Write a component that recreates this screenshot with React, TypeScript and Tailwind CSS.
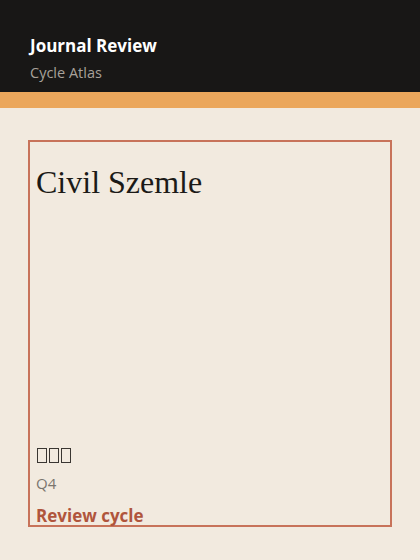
export default function App() {
  return (
    <div className="min-h-[560px] w-[420px] bg-[#f2eadf] font-['Open_Sans',sans-serif]">
      <header className="bg-[#181716] px-[30px] pb-[9px] pt-[34px]">
        <h1 className="text-[17px] font-bold leading-[23px] text-white">Journal Review</h1>
        <p className="mt-[5px] text-[14.5px] leading-[21px] text-[#a8a29a]">Cycle Atlas</p>
      </header>
      <div className="h-[16px] bg-[#eba75c]" />
      <main className="px-[28px] pt-[32px]">
        <article className="flex h-[387px] flex-col border-2 border-[#c8735a] px-[6px]">
          <h2 className="mt-[22px] font-['Liberation_Serif',serif] text-[32px] leading-[36px] text-[#1c1a17]">
            Civil Szemle
          </h2>
          <div className="mt-auto">
            {/* glyphs with no font: tofu boxes */}
            <div className="flex h-[22px] items-center gap-[2px] pl-[1px]">
              <span className="h-[15px] w-[10px] border-[1.5px] border-[#3a3632]" />
              <span className="h-[15px] w-[10px] border-[1.5px] border-[#3a3632]" />
              <span className="h-[15px] w-[10px] border-[1.5px] border-[#3a3632]" />
            </div>
            <p className="mt-[7px] text-[15px] leading-[20px] text-[#7a756e]">Q4</p>
            <p className="mt-[14px] text-[17px] font-bold leading-[18px] text-[#b0553c]">Review cycle</p>
          </div>
        </article>
      </main>
    </div>
  );
}
